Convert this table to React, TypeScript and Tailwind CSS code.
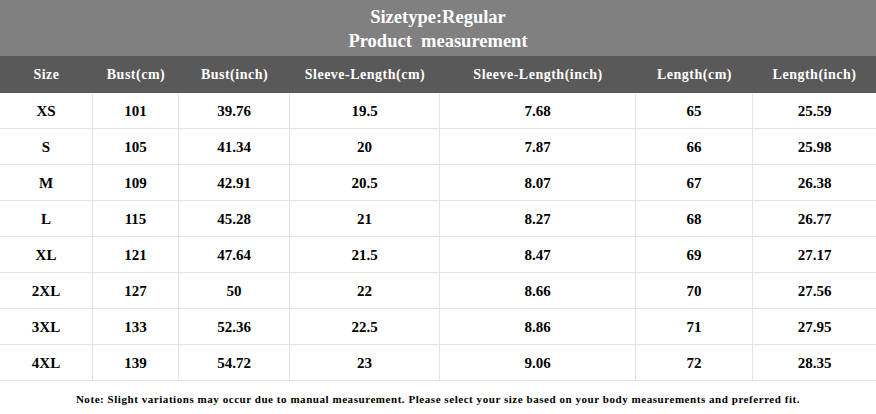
const columns = [
  'Size',
  'Bust(cm)',
  'Bust(inch)',
  'Sleeve-Length(cm)',
  'Sleeve-Length(inch)',
  'Length(cm)',
  'Length(inch)',
];

const rows: string[][] = [
  ['XS', '101', '39.76', '19.5', '7.68', '65', '25.59'],
  ['S', '105', '41.34', '20', '7.87', '66', '25.98'],
  ['M', '109', '42.91', '20.5', '8.07', '67', '26.38'],
  ['L', '115', '45.28', '21', '8.27', '68', '26.77'],
  ['XL', '121', '47.64', '21.5', '8.47', '69', '27.17'],
  ['2XL', '127', '50', '22', '8.66', '70', '27.56'],
  ['3XL', '133', '52.36', '22.5', '8.86', '71', '27.95'],
  ['4XL', '139', '54.72', '23', '9.06', '72', '28.35'],
];

const grid = 'grid grid-cols-[93px_86px_111px_150px_196px_117px_123px]';

export default function App() {
  return (
    <div className="h-[414px] w-[876px] bg-white font-['Liberation_Serif','Times_New_Roman',serif] font-bold text-black">
      <div className="flex h-[56px] flex-col items-center justify-center bg-[#808080] pt-[1px] text-[18.5px] leading-[24px] text-white">
        <p>Sizetype:Regular</p>
        <p className="whitespace-pre">Product  measurement</p>
      </div>

      <div className={`${grid} h-[37px] items-center bg-[#595959] text-[14px] tracking-[0.5px] text-white`}>
        {columns.map((col) => (
          <div key={col} className="text-center">
            {col}
          </div>
        ))}
      </div>

      {rows.map((row) => (
        <div key={row[0]} className={`${grid} h-[36px] border-b border-[#e3e3e3] text-[15px]`}>
          {row.map((cell, index) => (
            <div
              key={index}
              className={`flex items-center justify-center pt-[1px] ${index < row.length - 1 ? 'border-r border-[#e3e3e3]' : ''}`}
            >
              {cell}
            </div>
          ))}
        </div>
      ))}

      <p className="mt-[10px] text-center text-[11px] tracking-[0.55px]">
        Note: Slight variations may occur due to manual measurement. Please select your size based on your body measurements and preferred fit.
      </p>
    </div>
  );
}
